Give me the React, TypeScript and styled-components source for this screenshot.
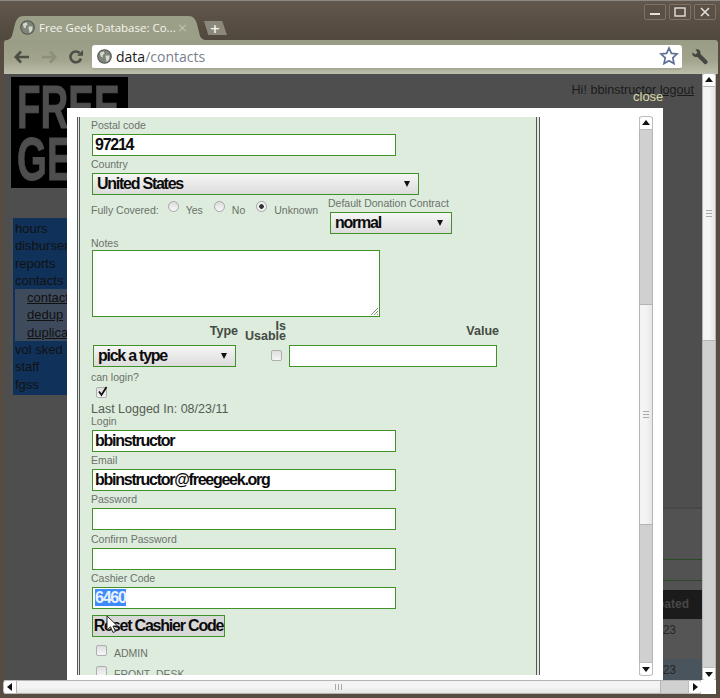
import React from "react";
import styled, { createGlobalStyle } from "styled-components";

const GlobalStyle = createGlobalStyle`
  html, body { margin: 0; padding: 0; background: #fff; }
  * { box-sizing: border-box; }
  body { font-family: "Liberation Sans", Arial, sans-serif; }
`;

const Window = styled.div`
  width: 720px;
  height: 698px;
  display: flex;
  flex-direction: column;
  overflow: hidden;
  background: #564c42;
  border-top: 1px solid #8b8883;
`;

const TitleBar = styled.div`
  height: 39px;
  flex: none;
  display: flex;
  align-items: flex-end;
  padding-left: 7px;
  background: linear-gradient(#62574d, #50473d);
`;

const Tab = styled.div`
  width: 198px;
  height: 24px;
  display: flex;
  align-items: center;
  gap: 4px;
  padding: 0 17px 1px 13px;
  background: #9c9f87;
  clip-path: path("M0 24 C5 23 5 20 7 12 C9 3 11 0 17 0 L181 0 C187 0 189 3 191 12 C193 20 193 23 198 24 Z");
  svg { flex: none; }
`;

const TabTitle = styled.span`
  flex: 1;
  min-width: 0;
  font: 11.5px "Open Sans", "Noto Sans", sans-serif;
  color: #f4f4ec;
  white-space: nowrap;
`;

const TabClose = styled.span`
  font: 13px "DejaVu Sans", sans-serif;
  color: #bfc1ad;
`;

const NewTab = styled.div`
  width: 24px;
  height: 14px;
  margin: 0 0 5px -2px;
  display: flex;
  align-items: center;
  justify-content: center;
  color: #f2f2ea;
  font: bold 13px "DejaVu Sans", sans-serif;
  background: #8b887b;
  clip-path: polygon(4% 0, 80% 0, 100% 100%, 22% 100%);
`;

const WindowControls = styled.div`
  margin: 0 4px auto auto;
  padding-top: 3px;
  display: flex;
  gap: 3px;
`;

const WindowButton = styled.div`
  width: 22px;
  height: 16px;
  display: flex;
  align-items: center;
  justify-content: center;
  border: 1px solid #7c7268;
  border-radius: 2px;
  background: #5a5046;
`;

const Toolbar = styled.div`
  height: 34px;
  flex: none;
  display: flex;
  align-items: center;
  margin: 0 2px 0 4px;
  padding: 0 9px 0 4px;
  border-radius: 3px 3px 0 0;
  background: linear-gradient(#999c84 0, #a2a48e 60%, #bdbeaa 100%);
`;

const NavIcon = styled.div`
  width: 27px;
  display: flex;
  justify-content: center;
`;

const UrlBar = styled.div`
  width: 590px;
  height: 25px;
  margin-left: 3px;
  display: flex;
  align-items: center;
  gap: 4px;
  padding: 0 3px 0 5px;
  background: #fff;
  border-radius: 3px;
  border-bottom: 2px solid #a8a995;
`;

const UrlText = styled.div`
  flex: 1;
  font: 14px "Open Sans", "Noto Sans", sans-serif;
  color: #77808c;
  b { font-weight: 400; color: #1a1a1a; }
`;

const Wrench = styled.div`
  margin-left: 9px;
  display: flex;
`;

const Viewport = styled.div`
  flex: 1;
  min-height: 0;
  display: flex;
  margin: 0 4px;
`;

const Page = styled.div`
  position: relative;
  flex: 1;
  min-width: 0;
  display: flex;
  background: #4e4e4e;
  overflow: hidden;
`;

const LeftColumn = styled.div`
  width: 128px;
  flex: none;
  padding: 3px 0 0 7px;
`;

const Logo = styled.div`
  width: 117px;
  height: 111px;
  overflow: hidden;
  padding: 4px 0 0 6px;
  background: #000;
  color: #4e4e4e;
  font: bold 62px/52px "Liberation Sans", sans-serif;
  -webkit-text-stroke: 1px #4e4e4e;
  span { display: block; transform: scaleX(0.62); transform-origin: left; }
`;

const NavMenu = styled.div`
  margin: 30px 0 0 2px;
  width: 110px;
  padding: 2px 0 2px 2px;
  background: #10315a;
`;

const NavItem = styled.div`
  height: 17.3px;
  font-size: 13px;
  line-height: 17px;
  color: #111;
`;

const NavSub = styled.div`
  background: #3e4b5c;
  padding-left: 12px;
  div { text-decoration: underline; }
`;

const RightColumn = styled.div`
  flex: 1;
  min-width: 0;
  display: flex;
  flex-direction: column;
`;

const Greeting = styled.div`
  height: 436px;
  padding: 9px 8px 0 0;
  text-align: right;
  font-size: 12.6px;
  line-height: 15px;
  color: #1b1b1b;
  border-bottom: 2px solid #474747;
  u { text-decoration: underline; }
`;

const LowerPanel = styled.div`
  flex: 1;
  background: #525252;
  display: flex;
  flex-direction: column;
  align-items: flex-end;
`;

const GreenRule = styled.div<{ $gap: number }>`
  width: 100%;
  height: 1px;
  margin-top: ${(p) => p.$gap}px;
  background: #2d4a27;
`;

const HeaderCell = styled.div`
  width: 100%;
  height: 29px;
  margin-top: 9px;
  background: #1b1b1b;
  color: #484848;
  font: bold 12px/29px "Liberation Sans", sans-serif;
  overflow: hidden;
  text-align: right;
  padding-right: 13px;
`;

const DataCell = styled.div<{ $tint?: boolean }>`
  width: 100%;
  height: ${(p) => (p.$tint ? 21 : 40)}px;
  padding: 3px 26px 0 0;
  background: ${(p) => (p.$tint ? "#4a545c" : "#555")};
  color: #272727;
  font-size: 12px;
  line-height: 16px;
  text-align: right;
`;

const CloseLink = styled.a`
  position: absolute;
  top: 15px;
  left: 629px;
  font-size: 13px;
  line-height: 15px;
  color: #d9d9a6;
`;

const Modal = styled.div`
  position: absolute;
  left: 63px;
  top: 34px;
  width: 596px;
  height: 572px;
  display: flex;
  padding: 9px 10px 5px 10px;
  background: #fff;
`;

const FormPane = styled.div`
  width: 463px;
  flex: none;
  overflow: hidden;
  padding: 2px 0 0 11px;
  background: #ddecdc;
  border-left: 3px double #555;
  border-right: 4px double #555;
`;

const Spacer = styled.div`
  flex: 1;
`;

const Label = styled.div`
  height: 13px;
  font-size: 10.5px;
  line-height: 13px;
  color: #6c716c;
  white-space: nowrap;
`;

const Field = styled.div`
  margin-bottom: 2.35px;
`;

const TextBox = styled.div<{ $width?: number; $height?: number }>`
  width: ${(p) => p.$width ?? 304}px;
  height: ${(p) => p.$height ?? 22}px;
  margin: 2px 0 0 1px;
  padding: 0 2px;
  border: 1px solid #3f9128;
  background: #fff;
  color: #0c0c0c;
  font-size: 16px;
  font-weight: bold;
  line-height: 20px;
  letter-spacing: -1.25px;
  white-space: nowrap;
  position: relative;
`;

const NotesBox = styled(TextBox)`
  margin-top: 0;
`;

const ValueBox = styled(TextBox)`
  margin: 0 0 0 7px;
`;

const Selected = styled.span`
  background: #3d8bfd;
  color: #eaf2ff;
`;

const ResizeGrip = styled.svg`
  position: absolute;
  right: 0;
  bottom: 0;
`;

const SelectBox = styled.div<{ $width: number }>`
  width: ${(p) => p.$width}px;
  height: 22px;
  margin: 2px 0 0 1px;
  padding: 0 8px 0 4px;
  display: flex;
  align-items: center;
  justify-content: space-between;
  border: 1px solid #3f9128;
  background: linear-gradient(#f6f6f6, #dcdcdc);
  color: #0c0c0c;
  font-size: 16px;
  font-weight: bold;
  letter-spacing: -1.25px;
  white-space: nowrap;
`;

const TypeSelect = styled(SelectBox)`
  margin: 0;
`;

const DonationSelect = styled(SelectBox)`
  margin-left: 2px;
`;

const Caret = styled.span`
  width: 0;
  height: 0;
  border-left: 3px solid transparent;
  border-right: 3px solid transparent;
  border-top: 6px solid #111;
`;

const CoverageRow = styled.div`
  display: flex;
  height: 39.7px;
  margin-top: -0.7px;
`;

const RadioGroup = styled.div`
  display: flex;
  align-items: flex-start;
  padding-top: 6px;
  width: 237px;
  font-size: 10.5px;
  line-height: 15px;
  color: #6c716c;
`;

const RadioItem = styled.span<{ $offset: number }>`
  display: flex;
  margin-left: ${(p) => p.$offset}px;
  gap: 7px;
  white-space: nowrap;
`;

const RadioDot = styled.span<{ $checked?: boolean }>`
  width: 11px;
  height: 11px;
  margin-top: -2px;
  flex: none;
  border-radius: 50%;
  border: 1px solid #a6a6a6;
  background: ${(p) =>
    p.$checked
      ? "radial-gradient(circle, #333 0 2px, #f0f0f0 2.6px)"
      : "linear-gradient(#dcdcdc, #f8f8f8)"};
`;

const ColumnHeads = styled.div`
  height: 28px;
  display: grid;
  grid-template-columns: 147px 48px 213px;
  align-items: center;
  color: #444a44;
  font-size: 12.5px;
  font-weight: bold;
  line-height: 10px;
  text-align: right;
`;

const TypeRow = styled.div`
  display: flex;
  align-items: center;
  margin-left: 2px;
`;

const CheckBox = styled.span<{ $inset: number }>`
  display: block;
  flex: none;
  width: 11px;
  height: 11px;
  margin-left: ${(p) => p.$inset}px;
  border: 1px solid #aeaeae;
  border-radius: 2px;
  background: linear-gradient(#dedede, #f6f6f6);
  position: relative;
`;

const LoginCheck = styled(CheckBox)`
  margin-top: 3px;
`;

const CheckMark = styled.svg`
  position: absolute;
  left: 0;
  top: -2px;
`;

const LoginBlock = styled.div`
  margin-top: 4px;
`;

const LastLogged = styled.div`
  height: 13px;
  margin-top: 4px;
  font-size: 12.5px;
  line-height: 15px;
  color: #555b55;
`;

const ResetButton = styled.div`
  position: relative;
  width: 133px;
  height: 22px;
  margin: 6px 0 0 1px;
  border: 1px solid #3f9128;
  background: #d8d8d8;
  color: #0c0c0c;
  text-align: center;
  font-size: 16px;
  font-weight: bold;
  line-height: 20px;
  letter-spacing: -1.2px;
  white-space: nowrap;
`;

const Pointer = styled.svg`
  position: absolute;
  left: 13px;
  top: -1px;
`;

const RoleGap = styled.div`
  height: 8px;
`;

const RoleRow = styled.div`
  display: flex;
  align-items: flex-start;
  height: 21px;
  gap: 7px;
  font-size: 10.5px;
  line-height: 16px;
  color: #6c716c;
`;

const Scrollbar = styled.div<{ $vertical?: boolean }>`
  display: flex;
  flex: none;
  flex-direction: ${(p) => (p.$vertical ? "column" : "row")};
  background: #d0d0d0;
  ${(p) => (p.$vertical ? "width: 14px;" : "height: 14px;")}
  border-${(p) => (p.$vertical ? "left" : "top")}: 1px solid #b4b4b4;
  border-${(p) => (p.$vertical ? "right" : "bottom")}: 1px solid #b4b4b4;
`;

const HorizontalBar = styled(Scrollbar)`
  flex: 1;
`;

const StepButton = styled.div<{ $radius: string }>`
  flex: none;
  width: 14px;
  height: 14px;
  margin: -1px;
  display: flex;
  align-items: center;
  justify-content: center;
  background: #fff;
  border: 1px solid #bdbdbd;
  border-radius: ${(p) => p.$radius};
`;

const Thumb = styled.div<{ $size: number; $offset: number; $vertical?: boolean }>`
  flex: none;
  display: flex;
  align-items: center;
  justify-content: center;
  ${(p) =>
    p.$vertical
      ? `height: ${p.$size}px; margin-top: ${p.$offset}px; background: linear-gradient(90deg, #f4f4f4 50%, #e6e6e6);
         border-top: 1px solid #b4b4b4; border-bottom: 1px solid #b4b4b4;`
      : `width: ${p.$size}px; margin-left: ${p.$offset}px; background: linear-gradient(#f4f4f4 50%, #e6e6e6);
         border-left: 1px solid #b4b4b4; border-right: 1px solid #b4b4b4;`}
`;

const Grip = styled.span<{ $vertical?: boolean }>`
  display: block;
  ${(p) =>
    p.$vertical
      ? `width: 6px; height: 8px;
         background: repeating-linear-gradient(#a8a8a8 0 1px, transparent 1px 3px);`
      : `width: 8px; height: 6px;
         background: repeating-linear-gradient(90deg, #a8a8a8 0 1px, transparent 1px 3px);`}
`;

const BottomRow = styled.div`
  flex: none;
  display: flex;
  margin: 0 4px;
  height: 14px;
  background: #fff;
`;

const Corner = styled.div`
  width: 15px;
  flex: none;
  background: #fff;
`;

const FooterEdge = styled.div`
  height: 4px;
  flex: none;
  background: #564c42;
`;

const ArrowIcon = styled.svg<{ $flip?: boolean }>`
  transform: ${(p) => (p.$flip ? "scaleX(-1)" : "none")};
`;

function Globe({ size }: { size: number }) {
  return (
    <svg width={size} height={size} viewBox="0 0 16 16">
      <circle cx="8" cy="8" r="7.2" fill="#7d8679" stroke="#555" strokeWidth="1.2" />
      <path d="M3 4 L7 2.5 L8 5 L6 6.5 L6.5 9 L4 8 Z M9 7 L13.5 7 L13 11 L10.5 14 L9.5 11 Z" fill="#d6d8cf" />
    </svg>
  );
}

function Triangle({ dir }: { dir: "up" | "down" | "left" | "right" }) {
  const points = {
    up: "5,2 9,7 1,7",
    down: "1,3 9,3 5,8",
    left: "7,1 7,9 2,5",
    right: "3,1 3,9 8,5",
  };
  return (
    <svg width="10" height="10" viewBox="0 0 10 10">
      <polygon points={points[dir]} fill="#111" />
    </svg>
  );
}

function Arrow({ color, flip }: { color: string; flip?: boolean }) {
  return (
    <ArrowIcon width="16" height="14" viewBox="0 0 16 14" $flip={flip}>
      <path d="M7 1.5 L1.8 7 L7 12.5 M2 7 H15" fill="none" stroke={color} strokeWidth="2.6" />
    </ArrowIcon>
  );
}

function TextField({ label, children }: { label: string; children?: React.ReactNode }) {
  return (
    <Field>
      <Label>{label}</Label>
      <TextBox>{children}</TextBox>
    </Field>
  );
}

export default function App() {
  return (
    <Window>
      <GlobalStyle />
      <TitleBar>
        <Tab>
          <Globe size={15} />
          <TabTitle>Free Geek Database: Co...</TabTitle>
          <TabClose>×</TabClose>
        </Tab>
        <NewTab>+</NewTab>
        <WindowControls>
          <WindowButton>
            <svg width="10" height="10" viewBox="0 0 10 10">
              <rect x="0" y="6" width="10" height="2" fill="#e4e1dc" />
            </svg>
          </WindowButton>
          <WindowButton>
            <svg width="12" height="10" viewBox="0 0 12 10">
              <rect x="1" y="1" width="10" height="8" fill="none" stroke="#e4e1dc" strokeWidth="1.4" />
            </svg>
          </WindowButton>
          <WindowButton>
            <svg width="10" height="10" viewBox="0 0 10 10">
              <path d="M1 1 L9 9 M9 1 L1 9" stroke="#e4e1dc" strokeWidth="1.6" />
            </svg>
          </WindowButton>
        </WindowControls>
      </TitleBar>
      <Toolbar>
        <NavIcon>
          <Arrow color="#4d4f46" />
        </NavIcon>
        <NavIcon>
          <Arrow color="#8d9079" flip />
        </NavIcon>
        <NavIcon>
          <svg width="16" height="16" viewBox="0 0 16 16">
            <path d="M13 9.5 A5.4 5.4 0 1 1 11.6 4" fill="none" stroke="#4d4f46" strokeWidth="2.6" />
            <polygon points="9,6.8 15,6.8 15,1" fill="#4d4f46" />
          </svg>
        </NavIcon>
        <UrlBar>
          <Globe size={15} />
          <UrlText>
            <b>data</b>/contacts
          </UrlText>
          <svg width="20" height="20" viewBox="0 0 20 20">
            <polygon
              points="10,2 12.4,7.4 18,8 13.8,11.9 15,17.6 10,14.7 5,17.6 6.2,11.9 2,8 7.6,7.4"
              fill="#fff"
              stroke="#5d7096"
              strokeWidth="1.7"
            />
          </svg>
        </UrlBar>
        <Wrench>
          <svg width="18" height="18" viewBox="0 0 18 18">
            <path
              d="M1.5 4.5 L4.5 6.5 L6.5 4.5 L4.5 1.5 C7.5 0.5 10 2.5 9.5 6 L16.5 13 C17.5 14.5 15 17 13.5 16 L6.5 9 C3.5 9.5 0.5 7.5 1.5 4.5 Z"
              fill="#45463f"
            />
          </svg>
        </Wrench>
      </Toolbar>
      <Viewport>
        <Page>
          <LeftColumn>
            <Logo>
              <span>FREE</span>
              <span>GEEK</span>
            </Logo>
            <NavMenu>
              <NavItem>hours</NavItem>
              <NavItem>disbursements</NavItem>
              <NavItem>reports</NavItem>
              <NavItem>contacts</NavItem>
              <NavSub>
                <NavItem>contacts</NavItem>
                <NavItem>dedup</NavItem>
                <NavItem>duplicates</NavItem>
              </NavSub>
              <NavItem>vol sked</NavItem>
              <NavItem>staff</NavItem>
              <NavItem>fgss</NavItem>
            </NavMenu>
          </LeftColumn>
          <RightColumn>
            <Greeting>
              Hi! bbinstructor <u>logout</u>
            </Greeting>
            <LowerPanel>
              <GreenRule $gap={50} />
              <GreenRule $gap={20} />
              <HeaderCell>Created</HeaderCell>
              <DataCell>2011-08-23</DataCell>
              <DataCell $tint>2011-08-23</DataCell>
            </LowerPanel>
          </RightColumn>
          <CloseLink>close</CloseLink>
          <Modal>
            <FormPane>
              <TextField label="Postal code">97214</TextField>
              <Field>
                <Label>Country</Label>
                <SelectBox $width={327}>
                  United States
                  <Caret />
                </SelectBox>
              </Field>
              <CoverageRow>
                <RadioGroup>
                  Fully Covered:
                  <RadioItem $offset={9}>
                    <RadioDot />
                    Yes
                  </RadioItem>
                  <RadioItem $offset={11}>
                    <RadioDot />
                    No
                  </RadioItem>
                  <RadioItem $offset={11}>
                    <RadioDot $checked />
                    Unknown
                  </RadioItem>
                </RadioGroup>
                <div>
                  <Label>Default Donation Contract</Label>
                  <DonationSelect $width={122}>
                    normal
                    <Caret />
                  </DonationSelect>
                </div>
              </CoverageRow>
              <Label>Notes</Label>
              <NotesBox $width={288} $height={67}>
                <ResizeGrip width="9" height="9" viewBox="0 0 9 9">
                  <path d="M1 8 L8 1 M4 8 L8 4 M7 8 L8 7" stroke="#8a8a8a" strokeWidth="1" />
                </ResizeGrip>
              </NotesBox>
              <ColumnHeads>
                <span>Type</span>
                <span>
                  Is
                  <br />
                  Usable
                </span>
                <span>Value</span>
              </ColumnHeads>
              <TypeRow>
                <TypeSelect $width={143}>
                  pick a type
                  <Caret />
                </TypeSelect>
                <CheckBox $inset={35} />
                <ValueBox $width={208} />
              </TypeRow>
              <LoginBlock>
                <Label>can login?</Label>
                <LoginCheck $inset={5}>
                  <CheckMark width="11" height="11" viewBox="0 0 11 11">
                    <path d="M2 5.5 L4.5 9 L9.5 1" fill="none" stroke="#111" strokeWidth="1.8" />
                  </CheckMark>
                </LoginCheck>
                <LastLogged>Last Logged In: 08/23/11</LastLogged>
              </LoginBlock>
              <TextField label="Login">bbinstructor</TextField>
              <TextField label="Email">bbinstructor@freegeek.org</TextField>
              <TextField label="Password" />
              <TextField label="Confirm Password" />
              <TextField label="Cashier Code">
                <Selected>6460</Selected>
              </TextField>
              <ResetButton>
                Reset Cashier Code
                <Pointer width="13" height="20" viewBox="0 0 13 20">
                  <path d="M1 1 L1 15 L4.5 11.8 L7 17.5 L9.5 16.4 L7 11 L11.5 11 Z" fill="#fff" stroke="#222" strokeWidth="1" />
                </Pointer>
              </ResetButton>
              <RoleGap />
              <RoleRow>
                <CheckBox $inset={5} />
                ADMIN
              </RoleRow>
              <RoleRow>
                <CheckBox $inset={5} />
                FRONT_DESK
              </RoleRow>
            </FormPane>
            <Spacer />
            <Scrollbar $vertical>
              <StepButton $radius="3px 3px 0 0">
                <Triangle dir="up" />
              </StepButton>
              <Thumb $vertical $size={221} $offset={175}>
                <Grip $vertical />
              </Thumb>
              <Spacer />
              <StepButton $radius="0 0 3px 3px">
                <Triangle dir="down" />
              </StepButton>
            </Scrollbar>
          </Modal>
        </Page>
        <Scrollbar $vertical>
          <StepButton $radius="3px 3px 0 0">
            <Triangle dir="up" />
          </StepButton>
          <Thumb $vertical $size={255} $offset={0}>
            <Grip $vertical />
          </Thumb>
          <Spacer />
          <StepButton $radius="0 0 3px 3px">
            <Triangle dir="down" />
          </StepButton>
        </Scrollbar>
      </Viewport>
      <BottomRow>
        <HorizontalBar>
          <StepButton $radius="3px 0 0 3px">
            <Triangle dir="left" />
          </StepButton>
          <Thumb $size={645} $offset={0}>
            <Grip />
          </Thumb>
          <Spacer />
          <StepButton $radius="0 3px 3px 0">
            <Triangle dir="right" />
          </StepButton>
        </HorizontalBar>
        <Corner />
      </BottomRow>
      <FooterEdge />
    </Window>
  );
}
